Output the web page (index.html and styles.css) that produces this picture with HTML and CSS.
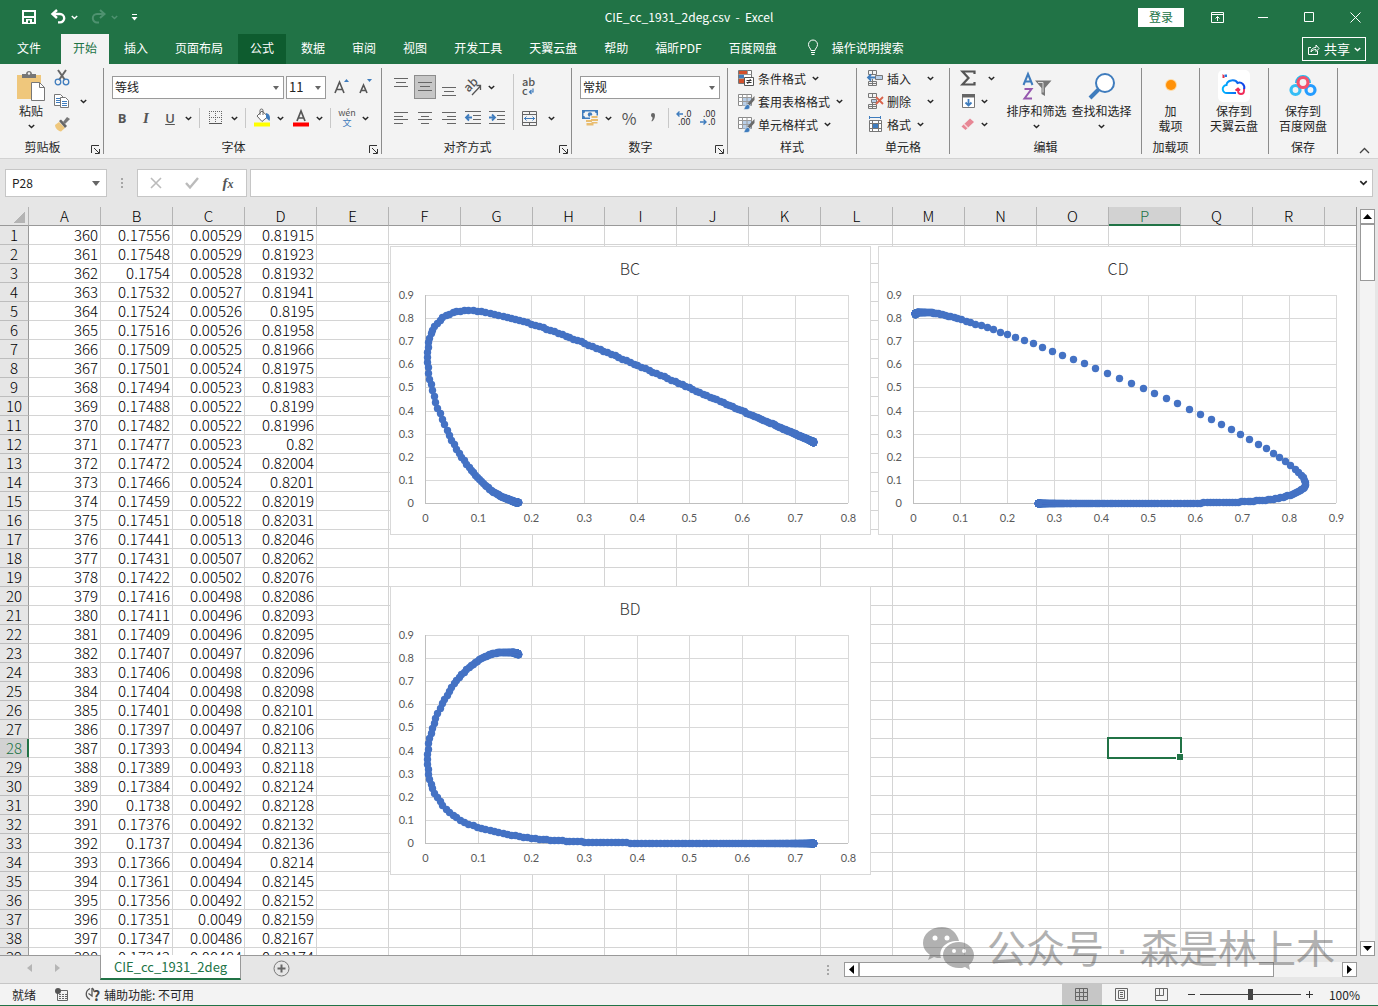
FILE: index.html
```html
<!DOCTYPE html>
<html lang="zh-CN">
<head>
  <meta charset="UTF-8" />
  <meta name="viewport" content="width=device-width, initial-scale=1.0" />
  <title>CIE_cc_1931_2deg.csv - Excel</title>
  <link rel="stylesheet" href="styles.css">
</head>
<body>
  <svg class="defs" width="0" height="0" aria-hidden="true">
    <symbol id="chev" viewBox="0 0 7 5"><path d="M.8 .9l2.7 2.7L6.2 .9" fill="none" stroke="currentColor" stroke-width="1.4"/></symbol>
    <symbol id="launch" viewBox="0 0 9 9"><path d="M.5 8V.5H8M3 3l5 5M8.500 4v4.500H4" fill="none" stroke="#333"/></symbol>
    <symbol id="brush" viewBox="0 0 17 17">
      <path d="M.5 1.500h13v11H.5z" fill="#fff" stroke="#8a8a8a"/>
      <path d="M4 4.500h9v8H4z" fill="#b9cfe8"/>
      <path d="M.5 4.500h13M.5 8.500h13M4.500 1.500v11M9 1.500v11" stroke="#9a9a9a" fill="none"/>
      <path d="M16.500 3v4l-5 5.500-2-2z" fill="#6a6a6a"/>
      <path d="M5 16.500c2 0 1.500-5 4.500-5 3 0 3.500 5-.5 5z" fill="#3f7cbd" stroke="#f3f3f3" stroke-width=".6"/>
    </symbol>
    <symbol id="cells" viewBox="0 0 17 17"><path d="M1.500.5h8v4h-8zM1.500 11.500h8v4h-8zM5.500.5v4M5.500 11.500v4M1.500 13.500h8M5.500 9v3" fill="none" stroke="#777"/></symbol>
  </svg>

  <header class="titlebar">
    <div class="quick">
      <button aria-label="保存" class="save"><svg width="14" height="14"><path d="M1 1h12v12H1z" fill="none" stroke="#fff" stroke-width="2"/><path d="M2 6h10v2H2zM4 9h6v4H4z" fill="#fff"/><path d="M6 10.500h2V13H6z" fill="#217346"/></svg></button>
      <button aria-label="撤消"><svg width="15" height="14"><path d="M2 4h7a4.200 4.200 0 0 1 0 8.400H7" fill="none" stroke="#fff" stroke-width="2.400"/><path d="M6 0L1.500 4 6 8" fill="none" stroke="#fff" stroke-width="2.400"/></svg></button>
      <button aria-label="撤消列表" class="pull"><svg width="7" height="5"><use href="#chev"/></svg></button>
      <button aria-label="恢复" class="dim"><svg width="15" height="14"><path d="M13 4H6a4.200 4.200 0 0 0 0 8.400h2" fill="none" stroke="currentColor" stroke-width="2"/><path d="M9 0l4.500 4L9 8" fill="none" stroke="currentColor" stroke-width="2"/></svg></button>
      <button aria-label="恢复列表" class="dim pull"><svg width="7" height="5"><use href="#chev"/></svg></button>
      <button aria-label="自定义快速访问工具栏"><svg width="7" height="7"><path d="M1 .5h5" stroke="#fff"/><path d="M.5 3h6l-3 3.500z" fill="#fff"/></svg></button>
    </div>
    <div class="doc-name">CIE_cc_1931_2deg.csv&nbsp; -&nbsp; Excel</div>
    <div class="window-tools">
      <button class="login">登录</button>
      <button aria-label="功能区显示选项"><svg width="13" height="11"><path d="M.5.5h12v10H.5zM.5 2.500h12M6.500 9V4.500M4.500 6.500l2-2 2 2" fill="none" stroke="#fff"/></svg></button>
      <button aria-label="最小化"><svg width="11" height="11"><path d="M0 5.500h10" stroke="#fff"/></svg></button>
      <button aria-label="最大化"><svg width="11" height="11"><path d="M.5.5h9v9h-9z" fill="none" stroke="#fff"/></svg></button>
      <button aria-label="关闭"><svg width="11" height="11"><path d="M.5.5l10 10M10.500.5l-10 10" stroke="#fff"/></svg></button>
    </div>
  </header>

  <nav class="tabs">
    <button class="tab file">文件</button>
    <button class="tab active">开始</button>
    <button class="tab">插入</button>
    <button class="tab">页面布局</button>
    <button class="tab hover">公式</button>
    <button class="tab">数据</button>
    <button class="tab">审阅</button>
    <button class="tab">视图</button>
    <button class="tab">开发工具</button>
    <button class="tab">天翼云盘</button>
    <button class="tab">帮助</button>
    <button class="tab">福昕PDF</button>
    <button class="tab">百度网盘</button>
    <button class="tell-me"><svg width="12" height="17"><path d="M4 11.500c0-2-2.500-3-2.500-6a4.500 4.500 0 0 1 9 0c0 3-2.500 4-2.500 6zM4 13.500h4M4.500 15.500h3" fill="none" stroke="#fff"/></svg>操作说明搜索</button>
    <button class="share"><svg width="13" height="13"><path d="M4 4.500H1.500v7h9V8M4 9c0-3 2-4.500 5-4.500V2l3 3.500-3 3V6.500C7 6.500 5 7 4 9z" fill="none" stroke="#fff"/></svg>共享<svg width="7" height="5"><use href="#chev"/></svg></button>
  </nav>

  <section class="ribbon">
    <div class="group clipboard">
      <div class="body">
        <button class="big">
          <svg width="30" height="32"><path d="M1 5h24v24H1z" fill="#efc77c"/><path d="M6 8V4h4c0-4 6-4 6 0h4v4z" fill="#767676"/><circle cx="13" cy="3.500" r="1.200" fill="#f3f3f3"/><path d="M15.500 12.500h8l5 5v13h-13z" fill="#fff" stroke="#777"/><path d="M23.500 12.500v5h5" fill="none" stroke="#777"/></svg>
          <span>粘贴</span>
          <svg width="7" height="5"><use href="#chev"/></svg>
        </button>
        <div class="stack">
          <button aria-label="剪切"><svg width="16" height="16"><path d="M4 0l7 10M12 0L5 10" stroke="#666" stroke-width="2"/><circle cx="4" cy="12" r="2.800" fill="none" stroke="#3f7cbd" stroke-width="1.300"/><circle cx="12" cy="12" r="2.800" fill="none" stroke="#3f7cbd" stroke-width="1.300"/></svg></button>
          <button aria-label="复制"><svg width="16" height="16"><path d="M.5 1.500h6l3 3v8h-9z" fill="#fff" stroke="#777"/><path d="M2 5.500h4M2 7.500h4M2 9.500h4" stroke="#3f7cbd"/><path d="M6.500 4.500h5l3 3v7h-8z" fill="#fff" stroke="#777"/><path d="M8 8.500h5M8 10.500h5M8 12.500h5" stroke="#3f7cbd"/></svg><svg class="far" width="7" height="5"><use href="#chev"/></svg></button>
          <button aria-label="格式刷"><svg width="16" height="16"><path d="M1 9l4-3 6 6-4 3.500C4 15 1 12 1 9z" fill="#efc77c"/><path d="M5 5l2-1.500L13 10l-2 2z" fill="#666"/><path d="M9 6l4-5 3 2-5 5z" fill="#777"/></svg></button>
        </div>
      </div>
      <div class="label">剪贴板<button aria-label="剪贴板选项" class="launcher"><svg width="9" height="9"><use href="#launch"/></svg></button></div>
    </div>

    <div class="group font">
      <div class="body rows">
        <div class="line">
          <span class="drop family"><select aria-label="字体"><option>等线</option></select></span>
          <span class="drop size"><select aria-label="字号"><option>11</option></select></span>
          <button class="ico first" aria-label="增大字号"><svg width="18" height="18"><path d="M2 15L6.500 4 11 15M3.500 11.500h6" fill="none" stroke="#555" stroke-width="1.600"/><path d="M11 4l2.500-3L16 4z" fill="#3f7cbd"/></svg></button>
          <button class="ico" aria-label="减小字号"><svg width="18" height="18"><path d="M3 15l3.500-8L10 15M4.500 12.500h4" fill="none" stroke="#555" stroke-width="1.600"/><path d="M10 1l2.500 3L15 1z" fill="#3f7cbd"/></svg></button>
        </div>
        <div class="line">
          <button class="ico letter"><b>B</b></button>
          <button class="ico letter"><i>I</i></button>
          <button class="ico letter"><u>U</u></button>
          <button class="arrow" aria-label="下划线"><svg width="7" height="5"><use href="#chev"/></svg></button>
          <span class="sep"></span>
          <button class="ico" aria-label="边框"><svg width="14" height="14"><path d="M.5 0v13M6.500 0v13M12.500 0v13M0 .5h13M0 6.500h13" stroke="#666" stroke-dasharray="1 1" fill="none"/><path d="M0 12.500h13" stroke="#555"/></svg></button>
          <button class="arrow" aria-label="边框列表"><svg width="7" height="5"><use href="#chev"/></svg></button>
          <span class="sep"></span>
          <button class="ico" aria-label="填充颜色"><svg width="17" height="18"><path d="M3 7l5-5 6 5.500-6 5z" fill="#fff" stroke="#666"/><path d="M6 6V1.500a1.500 1.500 0 0 1 3 0V6" fill="none" stroke="#666"/><path d="M12 4c4 1 4.500 4 3.500 8L12 9z" fill="#3f7cbd"/><path d="M0 13.500h16v4H0z" fill="#ff0"/></svg></button>
          <button class="arrow" aria-label="填充颜色列表"><svg width="7" height="5"><use href="#chev"/></svg></button>
          <button class="ico color" aria-label="字体颜色"><svg width="17" height="18"><path d="M4 12l4-10 4 10M5.500 9h5.500" fill="none" stroke="#555" stroke-width="1.700"/><path d="M0 13.500h16v4H0z" fill="#f00"/></svg></button>
          <button class="arrow" aria-label="字体颜色列表"><svg width="7" height="5"><use href="#chev"/></svg></button>
          <span class="sep"></span>
          <button class="ico pinyin"><span>wén</span><em>文</em></button>
          <button class="arrow" aria-label="拼音列表"><svg width="7" height="5"><use href="#chev"/></svg></button>
        </div>
      </div>
      <div class="label">字体<button aria-label="字体选项" class="launcher"><svg width="9" height="9"><use href="#launch"/></svg></button></div>
    </div>

    <div class="group align">
      <div class="body">
        <div class="rows">
          <div class="line">
            <button class="ico top" aria-label="顶端对齐"><svg width="14" height="14"><path d="M0 .5h14M2 4.500h10M0 8.500h14" stroke="#666"/></svg></button>
            <button class="ico on" aria-label="垂直居中"><svg width="14" height="14"><path d="M0 2.500h14M2 6.500h10M0 10.500h14" stroke="#666"/></svg></button>
            <button class="ico low" aria-label="底端对齐"><svg width="14" height="14"><path d="M0 5.500h14M2 9.500h10M0 13.500h14" stroke="#666"/></svg></button>
            <button class="ico" aria-label="方向"><svg width="17" height="17"><text x="0" y="11" font-size="12" font-weight="500" fill="#555" transform="rotate(-45 5 8)">ab</text><path d="M7 16L15.500 7M11.500 6.500h4V11" fill="none" stroke="#555" stroke-width="1.300"/></svg></button>
            <button class="arrow" aria-label="方向列表"><svg width="7" height="5"><use href="#chev"/></svg></button>
          </div>
          <div class="line">
            <button class="ico" aria-label="左对齐"><svg width="14" height="12"><path d="M0 .5h14M0 4.500h9M0 7.500h14M0 11.500h9" stroke="#666"/></svg></button>
            <button class="ico" aria-label="居中"><svg width="14" height="12"><path d="M0 .5h14M3 4.500h8M0 7.500h14M3 11.500h8" stroke="#666"/></svg></button>
            <button class="ico" aria-label="右对齐"><svg width="14" height="12"><path d="M0 .5h14M5 4.500h9M0 7.500h14M5 11.500h9" stroke="#666"/></svg></button>
            <button class="ico" aria-label="减少缩进量"><svg width="16" height="14"><path d="M0 .5h16M8 4.500h8M8 8.500h8M0 12.500h16" stroke="#666"/><path d="M7 6.500H1M4 3.500l-3 3 3 3" fill="none" stroke="#3f7cbd" stroke-width="1.800"/></svg></button>
            <button class="ico" aria-label="增加缩进量"><svg width="16" height="14"><path d="M0 .5h16M8 4.500h8M8 8.500h8M0 12.500h16" stroke="#666"/><path d="M0 6.500h6M3 3.500l3 3-3 3" fill="none" stroke="#3f7cbd" stroke-width="1.800"/></svg></button>
          </div>
        </div>
        <span class="sep tall"></span>
        <div class="rows">
          <div class="line">
            <button class="ico" aria-label="自动换行"><svg width="14" height="18"><text x="0" y="8" font-size="11" font-weight="500" fill="#555">ab</text><text x="0" y="17" font-size="11" font-weight="500" fill="#555">c</text><path d="M11 10.500v3.500H7.500M9.500 12l-2 2 2 2" fill="none" stroke="#3f7cbd" stroke-width="1.200"/></svg></button>
          </div>
          <div class="line">
            <button class="ico" aria-label="合并后居中"><svg width="15" height="15"><path d="M.5.5h14v14H.5zM.5 3.500h14M.5 11.500h14M7.500.5v3M7.500 11.500v3" fill="none" stroke="#666"/><path d="M2 7.500h11M4.500 5.500l-2 2 2 2M10.500 5.500l2 2-2 2" fill="none" stroke="#3f7cbd"/></svg></button>
            <button class="arrow wide" aria-label="合并列表"><svg width="7" height="5"><use href="#chev"/></svg></button>
          </div>
        </div>
      </div>
      <div class="label">对齐方式<button aria-label="对齐选项" class="launcher"><svg width="9" height="9"><use href="#launch"/></svg></button></div>
    </div>

    <div class="group number">
      <div class="body rows">
        <div class="line"><span class="drop format"><select aria-label="数字格式"><option>常规</option></select></span></div>
        <div class="line">
          <button class="ico" aria-label="会计数字格式"><svg width="17" height="16"><path d="M0 0h16v9H0z" fill="#3f7cbd"/><path d="M3 1.500h10c0 1 .5 1.500 1.500 1.500v3c-1 0-1.500.5-1.500 1.500H3C3 6.500 2.500 6 1.500 6V3C2.500 3 3 2.500 3 1.500z" fill="#f3f3f3"/><circle cx="8" cy="4.500" r="2.200" fill="#3f7cbd"/><path d="M8 5.500h8v8H8z" fill="#f3f3f3"/><path d="M9.500 6h6v2h-6zM9 9h7v2H9zM9.500 12h6v1.500h-6zM4 10h6v2H4zM4.500 13h7v2.500h-7z" fill="#e9bd70"/></svg></button>
          <button class="arrow" aria-label="会计格式列表"><svg width="7" height="5"><use href="#chev"/></svg></button>
          <button class="ico percent">%</button>
          <button class="ico" aria-label="千位分隔样式"><svg width="8" height="12"><path d="M2 3a2 2 0 1 1 4 0c0 3-1 5-3 6.500l-.6-.5c1-1.500 1.200-2.500 1.100-3.500C2.500 5.200 2 4 2 3z" fill="#666"/></svg></button>
          <span class="sep"></span>
          <button class="ico" aria-label="增加小数位数"><svg width="16" height="16"><text x="8" y="7" font-size="9" fill="#333">.0</text><text x="2" y="15" font-size="9" fill="#333">.00</text><path d="M7 4H1M3.500 1.500L1 4l2.500 2.500" fill="none" stroke="#3f7cbd" stroke-width="1.400"/></svg></button>
          <button class="ico" aria-label="减少小数位数"><svg width="16" height="16"><text x="3" y="7" font-size="9" fill="#333">.00</text><text x="8" y="15" font-size="9" fill="#333">.0</text><path d="M0 12h6M3.500 9.500L6 12l-2.500 2.500" fill="none" stroke="#3f7cbd" stroke-width="1.400"/></svg></button>
        </div>
      </div>
      <div class="label">数字<button aria-label="数字选项" class="launcher"><svg width="9" height="9"><use href="#launch"/></svg></button></div>
    </div>

    <div class="group styles">
      <div class="body list">
        <button><svg width="17" height="17"><path d="M.5.5h13v13H.5z" fill="#fff" stroke="#777"/><path d="M1 1h8v3H1zM1 9h5v4H1z" fill="#d3512d"/><path d="M1 5h5v3H1z" fill="#3f7cbd"/><path d="M.5 4.500h13M.5 8.500h13M9.500.5v4" stroke="#999"/><path d="M6.500 7.500h9v8h-9z" fill="#fff" stroke="#555"/><path d="M8.500 10.500h5M8.500 12.500h5M12.500 9l-3 5" stroke="#333"/></svg>条件格式<svg width="7" height="5"><use href="#chev"/></svg></button>
        <button><svg width="17" height="17"><use href="#brush"/></svg>套用表格格式<svg width="7" height="5"><use href="#chev"/></svg></button>
        <button><svg width="17" height="17"><use href="#brush"/></svg>单元格样式<svg width="7" height="5"><use href="#chev"/></svg></button>
      </div>
      <div class="label">样式</div>
    </div>

    <div class="group cellops">
      <div class="body list">
        <button><svg width="17" height="17"><use href="#cells"/><path d="M8.500 5.500h7v4h-7z" fill="#b9cfe8" stroke="#777"/><path d="M8 7.500H1M4 4.500l-3 3 3 3" fill="none" stroke="#3f7cbd" stroke-width="1.800"/></svg>插入<svg class="far" width="7" height="5"><use href="#chev"/></svg></button>
        <button><svg width="17" height="17"><use href="#cells"/><path d="M4.500 6.500h5v3h-5z" fill="#b9cfe8" stroke="#777"/><path d="M9 4l7 7M16 4l-7 7" stroke="#d9634a" stroke-width="1.800"/></svg>删除<svg class="far" width="7" height="5"><use href="#chev"/></svg></button>
        <button><svg width="17" height="17"><path d="M2.500 4.500h12v11h-12zM2.500 7.500h12M2.500 12.500h12M5.500 4.500v11M11.500 4.500v11" fill="#fff" stroke="#777"/><path d="M6 8h5v4H6z" fill="#3f7cbd"/><path d="M2 1.500h12M2.500 0v3M13.500 0v3" stroke="#3f7cbd"/></svg>格式<svg width="7" height="5"><use href="#chev"/></svg></button>
      </div>
      <div class="label">单元格</div>
    </div>

    <div class="group editing">
      <div class="body">
        <div class="list short">
          <button aria-label="自动求和"><svg width="17" height="17"><path d="M14.500 4V1.500H2.500L8.500 8l-6 6.500h12V12" fill="none" stroke="#555" stroke-width="2.200"/></svg><svg class="sum" width="7" height="5"><use href="#chev"/></svg></button>
          <button aria-label="填充"><svg width="17" height="17"><path d="M2.500 2.500h12v12h-12z" fill="#fff" stroke="#777"/><path d="M2 1h13v3.500H2z" fill="#666"/><path d="M8.500 6v6M5.500 9.500l3 3 3-3" fill="none" stroke="#3f7cbd" stroke-width="1.800"/></svg><svg width="7" height="5"><use href="#chev"/></svg></button>
          <button aria-label="清除"><svg width="17" height="17"><path d="M1.500 10.500L10 2.500l4 3.500-8.500 8z" fill="#e78795"/><path d="M4 8l4 4" stroke="#f7d8dc" stroke-width="1.500"/></svg><svg width="7" height="5"><use href="#chev"/></svg></button>
        </div>
        <button class="big"><svg width="30" height="30"><path d="M1.500 13L6 2l4.500 11M3 9.500h6" fill="none" stroke="#3f7cbd" stroke-width="2"/><path d="M2.500 17h7l-7 9.500h7.500" fill="none" stroke="#9557ae" stroke-width="2"/><path d="M13 8.500h16.500L23 16v8l-3.500-2v-6z" fill="#777"/><path d="M16 10.500h5v10" fill="none" stroke="#ddd"/></svg><span>排序和筛选</span><svg width="7" height="5"><use href="#chev"/></svg></button>
        <button class="big"><svg width="30" height="30"><path d="M12 17L3 26" stroke="#3f7cbd" stroke-width="4"/><circle cx="18" cy="11" r="9" fill="#fff" stroke="#3f7cbd" stroke-width="2"/></svg><span>查找和选择</span><svg width="7" height="5"><use href="#chev"/></svg></button>
      </div>
      <div class="label">编辑</div>
    </div>

    <div class="group addins">
      <div class="body"><button class="big"><svg width="32" height="32"><circle cx="16" cy="15" r="6" fill="#ffd9a0"/><circle cx="16" cy="15" r="5" fill="#ff9108"/></svg><span>加<br>载项</span></button></div>
      <div class="label">加载项</div>
    </div>
    <div class="group cloud">
      <div class="body"><button class="big"><svg width="32" height="32"><defs><linearGradient id="cl" x1="0" x2="1"><stop offset="0" stop-color="#00b4ff"/><stop offset="1" stop-color="#1240e8"/></linearGradient></defs><rect width="32" height="32" rx="5" fill="#fff"/><path d="M18 23H9a4 4 0 0 1-.5-8c.5-5.500 9-6 11-2 4-1.500 8 2 6.500 6.500" fill="none" stroke="url(#cl)" stroke-width="2"/><path d="M17.500 20.500l2.500-2 2 2M20 18.500V21a3 3 0 0 0 6 0v-2" fill="none" stroke="#f02b58" stroke-width="1.800"/><path d="M4.500 4l2 1.500v2.500h-2z" fill="#e5304b"/><path d="M6.500 4.500h2.500v2.500H6.500z" fill="#2678df"/></svg><span>保存到<br>天翼云盘</span></button></div>
      <div class="label"></div>
    </div>
    <div class="group baidu">
      <div class="body"><button class="big"><svg width="32" height="32"><path d="M9.500 13a6.500 6.500 0 1 1 13 0" fill="none" stroke="#20bdf2" stroke-width="3"/><circle cx="8.500" cy="20" r="4.500" fill="none" stroke="#35bdf5" stroke-width="3.200"/><circle cx="23.500" cy="20" r="4.500" fill="none" stroke="#249cff" stroke-width="3.200"/><circle cx="16" cy="12.500" r="5" fill="none" stroke="#f4516c" stroke-width="3.200"/></svg><span>保存到<br>百度网盘</span></button></div>
      <div class="label">保存</div>
    </div>
    <button class="collapse" aria-label="折叠功能区"><svg width="11" height="7"><path d="M1 6l4.500-4.500L10 6" fill="none" stroke="#444" stroke-width="1.300"/></svg></button>
  </section>

  <section class="formula-bar">
    <span class="drop name-box"><input aria-label="名称框" value="P28"></span>
    <span class="grip"></span>
    <div class="formula-buttons">
      <button aria-label="取消"><svg width="12" height="12"><path d="M1 1l10 10M11 1L1 11" stroke="#bbb" stroke-width="1.600"/></svg></button>
      <button aria-label="输入"><svg width="14" height="12"><path d="M1 6l4 4.500L13 1" fill="none" stroke="#bbb" stroke-width="2.400"/></svg></button>
      <button class="fx">f<sub>x</sub></button>
    </div>
    <div class="formula"><input aria-label="编辑栏"><button aria-label="展开编辑栏"><svg width="9" height="6" viewBox="0 0 7 5"><use href="#chev"/></svg></button></div>
  </section>

  <main class="workbook">
    <div class="sheet">
      <table id="grid"></table>
      <svg class="chart bc" id="chart-bc" width="481" height="289"></svg>
      <svg class="chart cd" id="chart-cd" width="481" height="289"></svg>
      <svg class="chart bd" id="chart-bd" width="481" height="289"></svg>
    </div>
    <div class="vscroll">
      <button aria-label="向上滚动"><svg width="9" height="5"><path d="M0 5l4.500-5L9 5z"/></svg></button>
      <div class="thumb"></div>
      <button class="end" aria-label="向下滚动"><svg width="9" height="5"><path d="M0 0h9L4.500 5z"/></svg></button>
    </div>
  </main>

  <div class="sheet-bar">
    <div class="sheet-nav">
      <button aria-label="上一张"><svg width="5" height="8"><path d="M5 0v8L0 4z" fill="#b5b5b5"/></svg></button>
      <button aria-label="下一张"><svg width="5" height="8"><path d="M0 0v8l5-4z" fill="#b5b5b5"/></svg></button>
    </div>
    <button class="sheet-tab">CIE_cc_1931_2deg</button>
    <button class="add" aria-label="新工作表"><svg width="17" height="17"><circle cx="8.500" cy="8.500" r="7.500" fill="none" stroke="#777"/><path d="M8.500 4.500v8M4.500 8.500h8" stroke="#666" stroke-width="2"/></svg></button>
    <span class="grip"></span>
    <div class="hscroll">
      <button aria-label="向左滚动"><svg width="5" height="9"><path d="M5 0v9L0 4.500z"/></svg></button>
      <div class="thumb"></div>
      <button class="end" aria-label="向右滚动"><svg width="5" height="9"><path d="M0 0v9l5-4.500z"/></svg></button>
    </div>
  </div>

  <footer class="status">
    <span class="ready">就绪</span>
    <button aria-label="录制宏"><svg width="14" height="14"><path d="M2.500 2.500h10v10h-10zM4 6.500h2M7 6.500h2M10 6.500h2M4 8.500h2M7 8.500h2M10 8.500h2M4 10.500h2M7 10.500h2M10 10.500h2" fill="none" stroke="#666"/><circle cx="3" cy="3" r="3" fill="#555"/></svg></button>
    <button class="access"><svg width="17" height="15"><path d="M5 1.500C0 4 0 10 5 12.500M9 4.500C9 2 8 1.500 7 1M3.500 6.500L7 9V1" fill="none" stroke="#555" stroke-width="1.300"/><text x="8" y="14" font-size="14" font-weight="bold" fill="#444">?</text></svg>辅助功能: 不可用</button>
    <div class="views">
      <button class="on" aria-label="普通"><svg width="13" height="13"><path d="M.5.5h12v12H.5zM4.500.5v12M8.500.5v12M.5 4.500h12M.5 8.500h12" fill="none" stroke="#666"/></svg></button>
      <button aria-label="页面布局"><svg width="13" height="13"><path d="M.5.5h12v12H.5zM3.500 2.500h6v8h-6zM5 4.500h3M5 6.500h3M5 8.500h3" fill="none" stroke="#666"/></svg></button>
      <button aria-label="分页预览"><svg width="13" height="13"><path d="M.5.5h12v12H.5zM.5 7.500h8v-7M4.500.5v7" fill="none" stroke="#666"/></svg></button>
    </div>
    <div class="zoom">
      <button aria-label="缩小"><svg width="9" height="9"><path d="M1 4.500h7" stroke="#333"/></svg></button>
      <input type="range" min="0" max="100" value="50" aria-label="缩放">
      <button aria-label="放大"><svg width="9" height="9"><path d="M1 4.500h7M4.500 1v7" stroke="#333"/></svg></button>
      <span>100%</span>
    </div>
  </footer>

  <div class="watermark">
    <svg width="52" height="44"><path d="M19 1C8 1 0 8 0 17c0 5 3 9 7 12l-2 5 6-3c2 1 4 1 7 1-3-10 6-18 18-17C34 7 28 1 19 1z" fill="#666"/><path d="M36 16c-9 0-16 6-16 13s7 13 16 13c2 0 4 0 6-1l5 3-1-5c3-2 5-6 5-10 0-7-7-13-15-13z" fill="#666"/><circle cx="12" cy="12" r="2.500" fill="#fff"/><circle cx="24" cy="12" r="2.500" fill="#fff"/><circle cx="31" cy="25" r="2" fill="#fff"/><circle cx="41" cy="25" r="2" fill="#fff"/></svg>
    <p>公众号<span>·</span>森是林上木</p>
  </div>

  <script src="script.js"></script>
</body>
</html>
```
FILE: styles.css
```css
* {
  margin: 0;
  padding: 0;
  box-sizing: border-box;
}

body {
  display: flex;
  flex-direction: column;
  height: 100vh;
  overflow: hidden;
  font-family: "Noto Sans CJK SC", "Open Sans", sans-serif;
  font-size: 12px;
  line-height: 16px;
  color: #262626;
  background: #e6e6e6;
}

button {
  border: 0;
  background: none;
  font: inherit;
  color: inherit;
  white-space: nowrap;
}

svg {
  display: block;
  flex: none;
  overflow: visible;
}

.defs {
  position: absolute;
}

/* title bar */
.titlebar {
  display: grid;
  grid-template-columns: 1fr auto 1fr;
  align-items: center;
  height: 34px;
  background: #217346;
  color: #fff;
}

.quick {
  display: flex;
  align-items: center;
  gap: 5px;
  padding-left: 22px;
}

.quick .save { margin-right: 10px; }
.quick .pull { margin-right: 8px; }
.quick .dim { color: #4f9270; }

.window-tools {
  display: flex;
  align-items: center;
  justify-content: flex-end;
}

.window-tools button {
  display: flex;
  align-items: center;
  justify-content: center;
  width: 46px;
  height: 30px;
}

.window-tools .login {
  height: 19px;
  margin-right: 10px;
  background: #fff;
  color: #217346;
}

/* ribbon tabs */
.tabs {
  display: flex;
  gap: 3px;
  height: 30px;
  background: #217346;
  color: #fff;
}

.tab {
  padding: 0 12px 3px;
}

.tab.file { padding: 0 17px 3px; }
.tab.active { background: #f3f3f3; color: #217346; }
.tab.hover { background: #0e5c2f; }

.tell-me {
  display: flex;
  align-items: center;
  gap: 13px;
  padding: 0 0 3px 15px;
}

.share {
  display: flex;
  align-items: center;
  gap: 4px;
  height: 24px;
  margin: 3px 12px 0 auto;
  padding: 0 4px;
  border: 1px solid #fff;
  font-size: 13px;
}

/* ribbon */
.ribbon {
  display: flex;
  height: 95px;
  padding: 4px 0;
  border-bottom: 1px solid #d2d2d2;
  background: #f3f3f3;
}

.group {
  display: flex;
  flex: none;
  flex-direction: column;
  border-right: 1px solid #8c8c8c;
}

.clipboard { width: 104px; }
.font { width: 278px; }
.align { width: 190px; }
.number { width: 156px; }
.styles { width: 129px; }
.cellops { width: 93px; }
.editing { width: 192px; }
.addins { width: 58px; }
.cloud, .baidu { width: 69px; }

.body {
  display: flex;
  height: 70px;
}

.label {
  position: relative;
  height: 16px;
  padding-right: 18px;
  text-align: center;
  line-height: 18px;
}

.styles .label, .cellops .label, .editing .label, .addins .label, .baidu .label {
  padding: 0;
}

.launcher {
  position: absolute;
  right: 3px;
  bottom: 0;
}

.big {
  display: flex;
  flex-direction: column;
  align-items: center;
  line-height: 15px;
  padding-top: 2px;
  gap: 1px;
}

.big span + svg { margin-top: 5px; }
.clipboard .big { padding-left: 16px; }

.stack {
  display: flex;
  flex-direction: column;
  gap: 7px;
  padding: 2px 0 0 8px;
}

.stack button {
  display: flex;
  align-items: center;
  gap: 10px;
}

.rows {
  display: flex;
  flex-direction: column;
  gap: 7px;
  padding-top: 7px;
}

.body.rows { padding-left: 6px; }
.align .body { padding-left: 7px; }

.line {
  display: flex;
  align-items: center;
  height: 24px;
}

.ico {
  display: flex;
  flex: none;
  align-items: center;
  justify-content: center;
  width: 24px;
  height: 24px;
  color: #555;
}

.ico.on { width: 22px; margin: 0 1px; border: 1px solid #8c8c8c; background: #c6c6c6; }
.ico.top { align-items: flex-start; padding-top: 3px; }
.ico.low { align-items: flex-end; padding-bottom: 3px; }
.ico.first { margin-left: 4px; }
.ico.color { margin-left: 3px; }

.letter {
  font-family: "Open Sans", sans-serif;
  font-size: 13px;
}

.letter i { font-family: "Liberation Serif", serif; font-size: 15px; font-weight: bold; }
.letter u { font-weight: 600; }
.percent { margin-left: 3px; font-size: 16px; }

.pinyin {
  flex-direction: column;
  line-height: 10px;
  font-size: 9px;
}

.pinyin em { font-style: normal; color: #3f7cbd; }

.arrow {
  display: flex;
  align-items: center;
  justify-content: center;
  width: 12px;
  height: 24px;
}

.arrow.wide { width: 20px; }

.sep {
  flex: none;
  width: 1px;
  height: 20px;
  margin: 0 4px 0 5px;
  background: #c8c8c8;
}

.number .sep { margin: 0 3px; }
.sep.tall { height: 56px; margin: 6px 3px 0 4px; }

.drop {
  position: relative;
  display: flex;
  height: 23px;
  border: 1px solid #9a9a9a;
  background: #fff;
}

.drop::after {
  content: '';
  position: absolute;
  top: 9px;
  right: 4px;
  border: 3px solid transparent;
  border-top: 4px solid #666;
  border-bottom: 0;
}

.drop select, .drop input {
  width: 100%;
  padding: 0 2px;
  border: 0;
  appearance: none;
  background: none;
  font: inherit;
  color: #222;
}

.family { width: 172px; margin: 0 2px; }
.size { width: 40px; font-size: 13px; }
.format { width: 140px; margin-left: 2px; }

.list {
  display: flex;
  flex-direction: column;
  height: 70px;
  padding-left: 10px;
}

.list button {
  display: flex;
  align-items: center;
  gap: 3px;
  height: 23px;
  padding-bottom: 2px;
}

.list button svg + svg { margin-left: 3px; }
.list button .far { margin-left: 13px; }
.list.short { width: 54px; }
.list.short button svg + svg { margin-left: 1px; }
.list.short button .sum { margin-left: 8px; }
.editing .big { width: 65px; padding-top: 4px; }
.addins .big, .cloud .big, .baidu .big { width: 100%; }

.collapse {
  align-self: flex-end;
  margin: 0 8px 0 auto;
}

/* formula bar */
.formula-bar {
  display: flex;
  height: 48px;
  padding: 10px 5px;
}

.formula-bar .drop {
  width: 102px;
  height: 28px;
  border-color: #c6c6c6;
}

.formula-bar .drop::after { top: 11px; right: 6px; border-width: 5px 4px 0; }
.formula-bar .drop input { padding: 0 6px; }

.grip {
  align-self: center;
  width: 2px;
  height: 10px;
  background: repeating-linear-gradient(#a6a6a6 0 2px, transparent 2px 4px);
}

.formula-bar .grip { margin: 0 14px; }

.formula-buttons {
  display: flex;
  width: 110px;
  margin-right: 3px;
  border: 1px solid #c6c6c6;
  background: #fff;
}

.formula-buttons button {
  display: flex;
  flex: 1;
  align-items: center;
  justify-content: center;
}

.formula-buttons .fx {
  display: block;
  font-family: "Liberation Serif", serif;
  font-size: 15px;
  font-style: italic;
  font-weight: bold;
  color: #555;
}

.fx sub { font-size: 12px; vertical-align: baseline; }

.formula {
  display: flex;
  flex: 1;
  border: 1px solid #c6c6c6;
  background: #fff;
}

.formula input {
  flex: 1;
  border: 0;
  font: inherit;
}

.formula button { padding: 0 4px; }

/* grid */
.workbook {
  display: flex;
  flex: 1;
  min-height: 0;
}

.sheet {
  position: relative;
  flex: 1;
  overflow: hidden;
  border-right: 1px solid #999;
  border-bottom: 1px solid #999;
  background: #fff;
}

table {
  width: 1901px;
  table-layout: fixed;
  border-collapse: separate;
  border-spacing: 0;
  font-size: 15px;
  font-weight: 300;
  line-height: 18px;
  color: #000;
}

th {
  font-weight: 300;
  background: #e6e6e6;
}

thead th {
  width: 72px;
  height: 19px;
  border-right: 1px solid #b4b4b4;
  border-bottom: 1px solid #999;
}

thead th:first-child { width: 29px; }

.corner {
  width: 11px;
  height: 11px;
  margin: 3px 0 0 14px;
  background: linear-gradient(135deg, transparent 50%, #b4b4b4 50%);
}

tbody th {
  height: 19px;
  border-right: 1px solid #999;
  border-bottom: 1px solid #bdbdbd;
}

td {
  padding-right: 2px;
  border-right: 1px solid #d4d4d4;
  border-bottom: 1px solid #d4d4d4;
  text-align: right;
}

th.picked { background: #d2d2d2; color: #217346; }
thead th.picked { border-bottom-color: #217346; box-shadow: inset 0 -1px #217346; }
tbody th.picked { border-right-color: #217346; box-shadow: inset -1px 0 #217346; }

td.picked { position: relative; }

td.picked::before {
  content: '';
  position: absolute;
  inset: -2px;
  border: 2px solid #217346;
}

td.picked::after {
  content: '';
  position: absolute;
  right: -3px;
  bottom: -3px;
  width: 6px;
  height: 6px;
  border: 1px solid #fff;
  border-width: 1px 0 0 1px;
  background: #217346;
}

/* charts float over the cells */
.chart {
  position: absolute;
  background: #fff;
  font-family: Lato, sans-serif;
}

.bc { left: 390px; top: 39px; }
.cd { left: 878px; top: 39px; }
.bd { left: 390px; top: 379px; }

.chart .frame { fill: none; stroke: #d9d9d9; }
.chart .gridline { stroke: #d9d9d9; }
.chart .axis { stroke: #bfbfbf; }
.chart .title { font-family: "Noto Sans CJK SC", sans-serif; font-size: 16px; font-weight: 300; fill: #333; }
.chart .tick { font-size: 11px; fill: #595959; }
.chart circle { fill: #4472c4; }

.vscroll {
  display: flex;
  flex-direction: column;
  width: 15px;
  margin: 2px 3px 0;
  background: #f3f3f3;
}

.vscroll button, .hscroll button {
  display: flex;
  flex: none;
  align-items: center;
  justify-content: center;
  width: 15px;
  height: 15px;
  border: 1px solid #999;
  background: #fff;
}

.vscroll .thumb, .hscroll .thumb {
  border: 1px solid #999;
  background: #fff;
}

.vscroll .thumb { height: 57px; }
.vscroll .end { margin-top: auto; }

/* sheet tabs */
.sheet-bar {
  display: flex;
  height: 28px;
  border-bottom: 1px solid #c6c6c6;
}

.sheet-nav {
  display: flex;
  gap: 23px;
  width: 100px;
  padding: 0 0 3px 27px;
}

.sheet-tab {
  position: relative;
  height: 25px;
  margin-top: -1px;
  padding: 0 13px;
  border: 1px solid #999;
  border-top: 0;
  border-bottom: 2px solid #217346;
  background: #fff;
  font-size: 13px;
  color: #217346;
}

.add {
  padding: 0 0 3px 32px;
}

.sheet-bar .grip { margin: 0 15px 0 auto; }

.hscroll {
  display: flex;
  flex: 0 1 513px;
  height: 15px;
  margin: 6px 21px 0 0;
  background: #f3f3f3;
}

.hscroll .thumb { flex: 0 0 415px; }
.hscroll .end { margin-left: auto; }

/* status bar */
.status {
  display: flex;
  align-items: center;
  height: 22px;
  padding: 0 18px 0 12px;
  border-bottom: 1px solid #217346;
  background: #f3f3f3;
}

.ready { margin-right: 19px; }

.access {
  display: flex;
  align-items: center;
  gap: 2px;
  margin-left: 16px;
}

.views {
  display: flex;
  height: 21px;
  margin-left: auto;
}

.views button {
  display: flex;
  align-items: center;
  justify-content: center;
  width: 40px;
}

.views .on { background: #c6c6c6; }

.zoom {
  display: flex;
  align-items: center;
  gap: 4px;
  margin-left: 5px;
}

.zoom span { margin-left: 11px; }

.zoom input {
  width: 101px;
  height: 12px;
  appearance: none;
  background: linear-gradient(#444, #444) center / 100% 1px no-repeat;
}

.zoom input::-webkit-slider-thumb {
  appearance: none;
  width: 5px;
  height: 11px;
  background: #444;
}

.watermark {
  position: absolute;
  right: 43px;
  bottom: 34px;
  display: flex;
  align-items: center;
  gap: 12px;
  opacity: 0.5;
  font-size: 39px;
  line-height: 44px;
  color: #666;
  pointer-events: none;
}

.watermark span {
  display: inline-block;
  width: 36px;
  font-family: "Liberation Sans", sans-serif;
  text-align: center;
}
```
FILE: script.js
```javascript
// wavelength, x, y, z
const rows = [
  [360, 0.17556, 0.00529, 0.81915], [361, 0.17548, 0.00529, 0.81923],
  [362, 0.1754, 0.00528, 0.81932], [363, 0.17532, 0.00527, 0.81941],
  [364, 0.17524, 0.00526, 0.8195], [365, 0.17516, 0.00526, 0.81958],
  [366, 0.17509, 0.00525, 0.81966], [367, 0.17501, 0.00524, 0.81975],
  [368, 0.17494, 0.00523, 0.81983], [369, 0.17488, 0.00522, 0.8199],
  [370, 0.17482, 0.00522, 0.81996], [371, 0.17477, 0.00523, 0.82],
  [372, 0.17472, 0.00524, 0.82004], [373, 0.17466, 0.00524, 0.8201],
  [374, 0.17459, 0.00522, 0.82019], [375, 0.17451, 0.00518, 0.82031],
  [376, 0.17441, 0.00513, 0.82046], [377, 0.17431, 0.00507, 0.82062],
  [378, 0.17422, 0.00502, 0.82076], [379, 0.17416, 0.00498, 0.82086],
  [380, 0.17411, 0.00496, 0.82093], [381, 0.17409, 0.00496, 0.82095],
  [382, 0.17407, 0.00497, 0.82096], [383, 0.17406, 0.00498, 0.82096],
  [384, 0.17404, 0.00498, 0.82098], [385, 0.17401, 0.00498, 0.82101],
  [386, 0.17397, 0.00497, 0.82106], [387, 0.17393, 0.00494, 0.82113],
  [388, 0.17389, 0.00493, 0.82118], [389, 0.17384, 0.00492, 0.82124],
  [390, 0.1738, 0.00492, 0.82128], [391, 0.17376, 0.00492, 0.82132],
  [392, 0.1737, 0.00494, 0.82136], [393, 0.17366, 0.00494, 0.8214],
  [394, 0.17361, 0.00494, 0.82145], [395, 0.17356, 0.00492, 0.82152],
  [396, 0.17351, 0.0049, 0.82159], [397, 0.17347, 0.00486, 0.82167],
  [398, 0.17342, 0.00484, 0.82174]
];

// x, y every 5 nm from 400 to 700
const locus = [
  [.1733, .0048], [.1730, .0048], [.1726, .0048], [.1721, .0048], [.1714, .0051], [.1703, .0058],
  [.1689, .0069], [.1669, .0086], [.1644, .0109], [.1611, .0138], [.1566, .0177], [.1510, .0227],
  [.1440, .0297], [.1355, .0399], [.1241, .0578], [.1096, .0868], [.0913, .1327], [.0687, .2007],
  [.0454, .2950], [.0235, .4127], [.0082, .5384], [.0039, .6548], [.0139, .7502], [.0389, .8120],
  [.0743, .8338], [.1142, .8262], [.1547, .8059], [.1929, .7816], [.2296, .7543], [.2658, .7243],
  [.3016, .6923], [.3373, .6589], [.3731, .6245], [.4087, .5896], [.4441, .5547], [.4788, .5202],
  [.5125, .4866], [.5448, .4544], [.5752, .4242], [.6029, .3965], [.6270, .3725], [.6482, .3514],
  [.6658, .3340], [.6801, .3197], [.6915, .3083], [.7006, .2993], [.7079, .2920], [.7140, .2859],
  [.7190, .2809], [.7230, .2770], [.7260, .2740], [.7283, .2717], [.7300, .2700], [.7311, .2689],
  [.7320, .2680], [.7327, .2673], [.7334, .2666], [.7340, .2660], [.7344, .2656], [.7346, .2654],
  [.7347, .2653]
];

function buildGrid() {
  let html = '<thead><tr><th><div class="corner"></div></th>';
  for (let c = 0; c < 26; c++) {
    html += `<th${c === 15 ? ' class="picked"' : ''}>${String.fromCharCode(65 + c)}</th>`;
  }
  html += '</tr></thead><tbody>';
  rows.forEach((row, r) => {
    html += `<tr><th${r === 27 ? ' class="picked"' : ''}>${r + 1}</th>`;
    for (let c = 0; c < 26; c++) {
      const picked = r === 27 && c === 15;
      html += `<td${picked ? ' class="picked"' : ''}>${c < 4 ? row[c] : ''}</td>`;
    }
    html += '</tr>';
  });
  document.getElementById('grid').innerHTML = html + '</tbody>';
}

// Catmull-Rom between the 5 nm samples gives one point per nm
function spline(a, b, c, d, t) {
  return 0.5 * (2 * b + (c - a) * t + (2 * a - 5 * b + 4 * c - d) * t * t + (3 * b - a - 3 * c + d) * t * t * t);
}

const points = rows.map(r => [r[1], r[2]]);
for (let i = 0; i < locus.length - 1; i++) {
  const p = [locus[Math.max(i - 1, 0)], locus[i], locus[i + 1], locus[Math.min(i + 2, locus.length - 1)]];
  for (let k = 0; k < 5; k++) {
    points.push([0, 1].map(n => spline(p[0][n], p[1][n], p[2][n], p[3][n], k / 5)));
  }
}
points.push(locus[locus.length - 1]);

function drawChart(id, title, xSteps, pick) {
  const left = 35, top = 49, width = 423, height = 208;
  const bottom = top + height;
  let svg = '<rect class="frame" x=".5" y=".5" width="480" height="288"/>';
  svg += `<text class="title" x="240" y="29" text-anchor="middle">${title}</text>`;
  for (let i = 0; i <= 9; i++) {
    const y = Math.round(bottom - i * height / 9) + 0.5;
    svg += `<path class="${i ? 'gridline' : 'axis'}" d="M${left} ${y}h${width}"/>`;
    svg += `<text class="tick" x="24" y="${y + 3.5}" text-anchor="end">${i / 10}</text>`;
  }
  for (let i = 0; i <= xSteps; i++) {
    const x = Math.round(left + i * width / xSteps) + 0.5;
    svg += `<path class="${i ? 'gridline' : 'axis'}" d="M${x} ${top}v${height}"/>`;
    svg += `<text class="tick" x="${x}" y="276" text-anchor="middle">${i / 10}</text>`;
  }
  points.forEach(([x, y]) => {
    const [px, py] = pick(x, y, 1 - x - y);
    const cx = Math.round(left + px * 10 * width / xSteps) + 0.5;
    const cy = Math.round(bottom - py * 10 * height / 9) + 0.5;
    svg += `<circle cx="${cx}" cy="${cy}" r="3.7"/>`;
  });
  document.getElementById(id).innerHTML = svg;
}

buildGrid();
drawChart('chart-bc', 'BC', 8, (x, y, z) => [x, y]);
drawChart('chart-cd', 'CD', 9, (x, y, z) => [y, z]);
drawChart('chart-bd', 'BD', 8, (x, y, z) => [x, z]);
```
